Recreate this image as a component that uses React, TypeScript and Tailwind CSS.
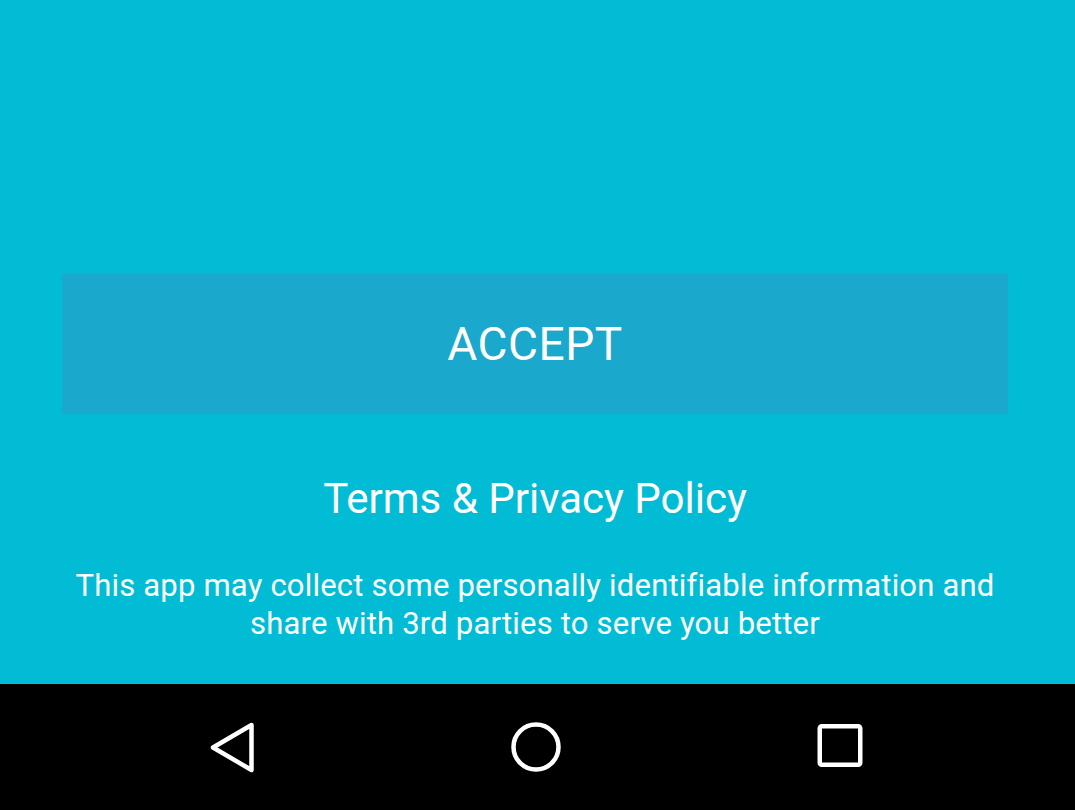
import React from "react";

export default function App() {
  return (
    <div
      className="w-[1075px] h-[810px] flex flex-col bg-[#02bcd6] overflow-hidden"
      style={{ fontFamily: "Roboto, 'Liberation Sans', sans-serif" }}
    >
      {/* Main content */}
      <div className="flex-1 flex flex-col items-center pt-[274px] pr-[5px]">
        <button className="w-[946px] h-[140px] bg-[#1aa8cc] text-white text-[46px] leading-none tracking-[0.5px] flex items-center justify-center">
          ACCEPT
        </button>
        <div className="mt-[61px] text-white text-[42px] leading-[48px]">
          Terms &amp; Privacy Policy
        </div>
        <p className="mt-[44px] w-[980px] text-center text-white text-[31px] leading-[38px] tracking-[0.2px]">
          This app may collect some personally identifiable information and
          <br />
          share with 3rd parties to serve you better
        </p>
      </div>

      {/* Android nav bar */}
      <div className="h-[126px] bg-black flex items-center justify-center gap-[244px] pr-[4px]">
        <svg width="60" height="60" viewBox="0 0 60 60">
          <path
            d="M49.5 8 L11 30.5 L49.5 53 Z"
            fill="none"
            stroke="white"
            strokeWidth="4.5"
            strokeLinejoin="round"
          />
        </svg>
        <svg width="60" height="60" viewBox="0 0 60 60">
          <circle cx="30" cy="30" r="22.5" fill="none" stroke="white" strokeWidth="4.5" />
        </svg>
        <svg width="60" height="60" viewBox="0 0 60 60">
          <rect x="9.75" y="9.25" width="40.5" height="38.5" rx="2" fill="none" stroke="white" strokeWidth="4.5" />
        </svg>
      </div>
    </div>
  );
}
